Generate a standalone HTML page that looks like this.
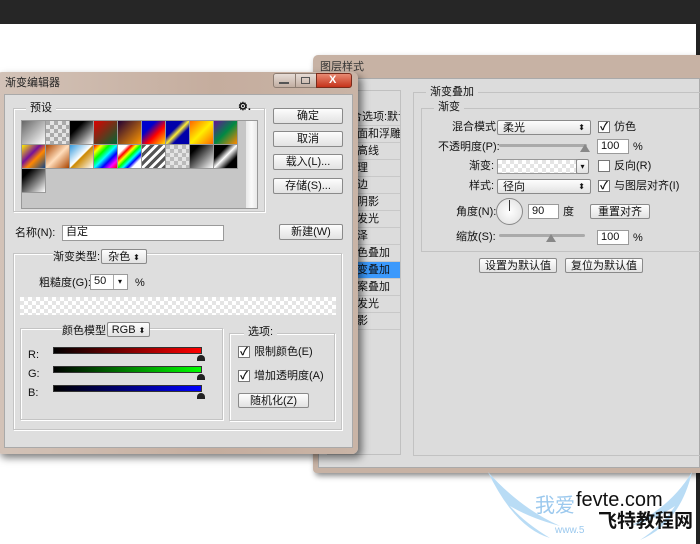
<!DOCTYPE html>
<html><head><meta charset="utf-8"><style>
*{box-sizing:border-box;margin:0;padding:0}
body{width:700px;height:544px;overflow:hidden;background:#fff;position:relative;font-family:"Liberation Sans","Noto Sans CJK SC",sans-serif;font-size:11px;color:#111}
.a{position:absolute}
.t{position:absolute;white-space:nowrap;line-height:12px}
.btn{position:absolute;border:1px solid #8a8a8a;border-radius:2px;background:linear-gradient(#fdfdfd,#e2e2e2);text-align:center;font-size:11px;line-height:14px}
.inp{position:absolute;background:#fff;border:1px solid #9a9a9a;line-height:13px;padding-left:3px}
.grp{position:absolute;border:1px solid #c4c4c4;box-shadow:1px 1px 0 #fff inset,1px 1px 0 #fff}
.leg{position:absolute;background:#dedede;padding:0 4px;line-height:12px}
.chk{position:absolute;width:12px;height:12px;border:1px solid #777;background:#fff;font-size:11px;line-height:10px;text-align:center}
.chk.on::after{content:"✓";font-weight:bold}
.chess{background-color:#fff;background-image:linear-gradient(45deg,#e4e4e4 25%,transparent 25%,transparent 75%,#e4e4e4 75%),linear-gradient(45deg,#e4e4e4 25%,transparent 25%,transparent 75%,#e4e4e4 75%);background-size:8px 8px;background-position:0 0,4px 4px}
.sw{position:absolute;width:24px;height:24px;border-right:1px solid #999;border-bottom:1px solid #999}
.li{position:absolute;left:328px;width:72px;height:17px;border-bottom:1px solid #c8c8c8;line-height:16px;padding-left:18px;font-size:11px;white-space:nowrap;overflow:hidden}
</style></head><body>
<div class="a" style="left:0;top:0;width:700px;height:24px;background:#262626"></div>
<div class="a" style="left:696px;top:24px;width:4px;height:32px;background:#222"></div>
<div class="a" style="left:696px;top:462px;width:4px;height:82px;background:#222"></div>

<!-- Layer style window -->
<div class="a" style="left:313px;top:55px;width:390px;height:418px;background:#c7b2a4;border-radius:5px 0 0 4px;box-shadow:2px 3px 6px rgba(0,0,0,.45)"></div>
<div class="t" style="left:320px;top:61px;color:#333">图层样式</div>
<div class="a" style="left:318px;top:78px;width:382px;height:390px;background:#dcdcdc;border:1px solid #aaa"></div>
<div class="a" style="left:327px;top:90px;width:74px;height:365px;background:#dcdcdc;border:1px solid #c0c0c0"></div>
<div class="li" style="top:109px;padding-left:12px">混合选项:默认</div>
<div class="li" style="top:126px">斜面和浮雕</div>
<div class="li" style="top:143px">等高线</div>
<div class="li" style="top:160px">纹理</div>
<div class="li" style="top:177px">描边</div>
<div class="li" style="top:194px">内阴影</div>
<div class="li" style="top:211px">内发光</div>
<div class="li" style="top:228px">光泽</div>
<div class="li" style="top:245px">颜色叠加</div>
<div class="li" style="top:262px;background:#3b99fc;color:#111">渐变叠加</div>
<div class="li" style="top:279px">图案叠加</div>
<div class="li" style="top:296px">外发光</div>
<div class="li" style="top:313px">投影</div>

<div class="a" style="left:413px;top:92px;width:290px;height:364px;border:1px solid #c2c2c2"></div>
<div class="t" style="left:426px;top:86px;background:#dcdcdc;padding:0 4px">渐变叠加</div>
<div class="a" style="left:421px;top:108px;width:282px;height:144px;border:1px solid #c2c2c2"></div>
<div class="t" style="left:434px;top:101px;background:#dcdcdc;padding:0 4px">渐变</div>

<div class="t" style="left:452px;top:121px">混合模式:</div>
<div class="btn" style="left:497px;top:120px;width:94px;height:15px;text-align:left;padding-left:5px">柔光<span style="position:absolute;right:5px;font-size:8px">⬍</span></div>
<div class="chk on" style="left:598px;top:121px"></div><div class="t" style="left:614px;top:121px">仿色</div>
<div class="t" style="left:438px;top:141px">不透明度(P):</div>
<div class="a" style="left:499px;top:144px;width:88px;height:3px;background:#aaa;border-radius:2px"></div>
<div class="a" style="left:580px;top:144px;width:0;height:0;border-left:5px solid transparent;border-right:5px solid transparent;border-bottom:8px solid #888"></div>
<div class="inp" style="left:597px;top:139px;width:32px;height:15px">100</div><div class="t" style="left:633px;top:141px">%</div>
<div class="t" style="left:469px;top:160px">渐变:</div>
<div class="a chess" style="left:497px;top:159px;width:80px;height:15px;border:1px solid #999"></div>
<div class="btn" style="left:576px;top:159px;width:13px;height:15px;font-size:8px">▾</div>
<div class="chk" style="left:598px;top:160px"></div><div class="t" style="left:614px;top:160px">反向(R)</div>
<div class="t" style="left:469px;top:180px">样式:</div>
<div class="btn" style="left:497px;top:179px;width:94px;height:15px;text-align:left;padding-left:5px">径向<span style="position:absolute;right:5px;font-size:8px">⬍</span></div>
<div class="chk on" style="left:598px;top:180px"></div><div class="t" style="left:614px;top:180px">与图层对齐(I)</div>
<div class="t" style="left:456px;top:206px">角度(N):</div>
<div class="a" style="left:496px;top:198px;width:27px;height:27px;border-radius:50%;border:1px solid #888;background:radial-gradient(#fff,#ddd)"></div>
<div class="a" style="left:509px;top:200px;width:1px;height:11px;background:#333"></div>
<div class="inp" style="left:528px;top:204px;width:31px;height:15px">90</div>
<div class="t" style="left:563px;top:206px">度</div>
<div class="btn" style="left:590px;top:204px;width:60px;height:15px">重置对齐</div>
<div class="t" style="left:456px;top:231px">缩放(S):</div>
<div class="a" style="left:499px;top:234px;width:86px;height:3px;background:#aaa;border-radius:2px"></div>
<div class="a" style="left:546px;top:234px;width:0;height:0;border-left:5px solid transparent;border-right:5px solid transparent;border-bottom:8px solid #888"></div>
<div class="inp" style="left:597px;top:230px;width:32px;height:15px">100</div><div class="t" style="left:633px;top:232px">%</div>
<div class="btn" style="left:479px;top:258px;width:78px;height:15px">设置为默认值</div>
<div class="btn" style="left:565px;top:258px;width:78px;height:15px">复位为默认值</div>

<!-- Gradient editor -->
<div class="a" style="left:-4px;top:72px;width:362px;height:382px;background:linear-gradient(90deg,#d3c3b8,#c5ad9e 60%,#c9b4a6);border-radius:6px;box-shadow:4px 4px 8px rgba(0,0,0,.5)"></div>
<div class="t" style="left:5px;top:77px;color:#222">渐变编辑器</div>
<div class="a" style="left:273px;top:73px;width:23px;height:15px;border:1px solid #8d7d72;border-radius:3px 0 0 3px;background:linear-gradient(#e6dcd6,#c2aea2)"></div>
<div class="a" style="left:279px;top:82px;width:10px;height:2px;background:#555"></div>
<div class="a" style="left:295px;top:73px;width:22px;height:15px;border:1px solid #8d7d72;background:linear-gradient(#e6dcd6,#c2aea2)"></div>
<div class="a" style="left:301px;top:77px;width:9px;height:7px;border:1px solid #555"></div>
<div class="a" style="left:316px;top:73px;width:36px;height:15px;border:1px solid #7a2b1b;border-radius:0 3px 3px 0;background:linear-gradient(#e88a72,#c5331b)"></div>
<div class="t" style="left:329px;top:74px;color:#fff;font-weight:bold;font-size:11px">X</div>
<div class="a" style="left:4px;top:94px;width:349px;height:354px;background:#dedede;border:1px solid #a9a9a9"></div>

<div class="grp" style="left:13px;top:108px;width:252px;height:104px"></div>
<div class="leg" style="left:26px;top:102px">预设</div>
<div class="t" style="left:238px;top:101px;font-weight:bold">⚙.</div>
<div class="a" style="left:21px;top:120px;width:237px;height:89px;background:#c6c6c6;border:1px solid #999"></div>
<div class="a" style="left:246px;top:121px;width:11px;height:87px;background:linear-gradient(90deg,#e8e8e8,#fafafa,#e8e8e8)"></div>
<div class="sw" style="left:22px;top:121px;background:linear-gradient(135deg,#666,#fff)"></div>
<div class="sw chess" style="left:46px;top:121px;background-color:#aaa"></div>
<div class="sw" style="left:70px;top:121px;background:linear-gradient(135deg,#000 30%,#fff)"></div>
<div class="sw" style="left:94px;top:121px;background:linear-gradient(135deg,#d00,#063)"></div>
<div class="sw" style="left:118px;top:121px;background:linear-gradient(135deg,#203,#f90)"></div>
<div class="sw" style="left:142px;top:121px;background:linear-gradient(135deg,#00c 30%,#f00 60%,#fd0)"></div>
<div class="sw" style="left:166px;top:121px;background:linear-gradient(135deg,#00a 35%,#fe3 50%,#00a 65%)"></div>
<div class="sw" style="left:190px;top:121px;background:linear-gradient(135deg,#f60,#fe0 50%,#f60)"></div>
<div class="sw" style="left:214px;top:121px;background:linear-gradient(135deg,#619,#084 50%,#f80)"></div>
<div class="sw" style="left:22px;top:145px;background:linear-gradient(135deg,#fe0,#719 40%,#f80 60%,#148)"></div>
<div class="sw" style="left:46px;top:145px;background:linear-gradient(135deg,#a40,#fdb 50%,#a40)"></div>
<div class="sw" style="left:70px;top:145px;background:linear-gradient(135deg,#39d,#fff 48%,#c80 52%,#fff)"></div>
<div class="sw" style="left:94px;top:145px;background:linear-gradient(135deg,#f00,#ff0,#0f0,#0ff,#00f,#f0f,#f00)"></div>
<div class="sw" style="left:118px;top:145px;background:linear-gradient(135deg,#fff 20%,#f00,#ff0,#0f0,#0ff,#00f,#fff 80%)"></div>
<div class="sw" style="left:142px;top:145px;background:repeating-linear-gradient(135deg,#555 0 3px,#fff 3px 6px)"></div>
<div class="sw chess" style="left:166px;top:145px;background-color:#bbb"></div>
<div class="sw" style="left:190px;top:145px;background:linear-gradient(135deg,#000 20%,#fff)"></div>
<div class="sw" style="left:214px;top:145px;background:linear-gradient(135deg,#000 30%,#fff 50%,#000 75%)"></div>
<div class="sw" style="left:22px;top:169px;background:linear-gradient(135deg,#000 20%,#fff)"></div>

<div class="btn" style="left:273px;top:108px;width:70px;height:16px">确定</div>
<div class="btn" style="left:273px;top:131px;width:70px;height:16px">取消</div>
<div class="btn" style="left:273px;top:154px;width:70px;height:16px">载入(L)...</div>
<div class="btn" style="left:273px;top:178px;width:70px;height:16px">存储(S)...</div>

<div class="t" style="left:15px;top:227px">名称(N):</div>
<div class="inp" style="left:62px;top:225px;width:162px;height:16px">自定</div>
<div class="btn" style="left:279px;top:224px;width:64px;height:16px">新建(W)</div>

<div class="grp" style="left:13px;top:253px;width:329px;height:177px"></div>
<div class="t" style="left:53px;top:251px;background:#dedede;padding-right:3px">渐变类型:</div>
<div class="btn" style="left:101px;top:249px;width:46px;height:15px">杂色 <span style="font-size:8px">⬍</span></div>
<div class="t" style="left:39px;top:277px">粗糙度(G):</div>
<div class="inp" style="left:90px;top:274px;width:38px;height:16px">50</div>
<div class="a" style="left:113px;top:275px;width:1px;height:14px;background:#aaa"></div>
<div class="t" style="left:118px;top:276px;font-size:8px">▾</div>
<div class="t" style="left:135px;top:277px">%</div>
<div class="a chess" style="left:20px;top:297px;width:316px;height:18px"></div>

<div class="grp" style="left:20px;top:328px;width:203px;height:92px"></div>
<div class="t" style="left:62px;top:325px;background:#dedede;padding-right:3px">颜色模型</div>
<div class="btn" style="left:107px;top:322px;width:43px;height:15px">RGB <span style="font-size:8px">⬍</span></div>
<div class="t" style="left:28px;top:349px">R:</div>
<div class="t" style="left:28px;top:368px">G:</div>
<div class="t" style="left:28px;top:387px">B:</div>
<div class="a" style="left:53px;top:347px;width:149px;height:7px;background:linear-gradient(90deg,#000,#f00);border:1px solid #333"></div>
<div class="a" style="left:53px;top:366px;width:149px;height:7px;background:linear-gradient(90deg,#000,#0f0);border:1px solid #333"></div>
<div class="a" style="left:53px;top:385px;width:149px;height:7px;background:linear-gradient(90deg,#000,#00f);border:1px solid #333"></div>
<div class="a" style="left:197px;top:355px;width:8px;height:6px;background:#222;border-radius:4px 4px 0 0"></div>
<div class="a" style="left:197px;top:374px;width:8px;height:6px;background:#222;border-radius:4px 4px 0 0"></div>
<div class="a" style="left:197px;top:393px;width:8px;height:6px;background:#222;border-radius:4px 4px 0 0"></div>

<div class="grp" style="left:229px;top:333px;width:106px;height:88px"></div>
<div class="leg" style="left:244px;top:326px">选项:</div>
<div class="chk on" style="left:238px;top:346px"></div><div class="t" style="left:254px;top:346px">限制颜色(E)</div>
<div class="chk on" style="left:238px;top:370px"></div><div class="t" style="left:254px;top:370px">增加透明度(A)</div>
<div class="btn" style="left:238px;top:393px;width:71px;height:15px">随机化(Z)</div>

<!-- watermark -->
<svg class="a" style="left:480px;top:468px" width="220" height="76"><path d="M8 4 Q40 40 80 58 Q50 50 30 38 Q45 55 70 70 Q35 60 8 4Z" fill="#b9dcf5"/><path d="M212 4 Q190 40 150 58 Q175 52 195 38 Q182 58 160 72 Q200 55 212 4Z" fill="#b9dcf5"/></svg>
<div class="t" style="left:535px;top:500px;font-size:20px;color:#9cc9ee">我爱</div>
<div class="t" style="left:576px;top:494px;font-size:20px;color:#111">fevte.com</div>
<div class="t" style="left:598px;top:516px;font-size:19px;font-weight:bold;color:#111">飞特教程网</div>
<div class="t" style="left:555px;top:525px;font-size:10px;color:#9cc9ee">www.5</div>
</body></html>
